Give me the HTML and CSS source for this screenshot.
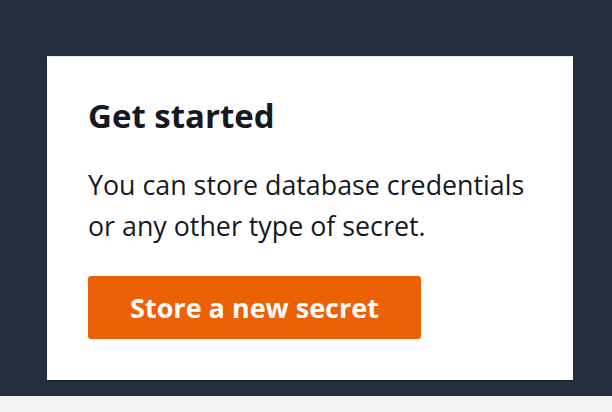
FILE: index.html
```html
<!DOCTYPE html>
<html>
<head>
<meta charset="utf-8">
<link rel="stylesheet" href="styles.css">
</head>
<body>
<div class="stage">
  <div class="card">
    <h2 class="title">Get started</h2>
    <p class="text">You can store database credentials<br>or any other type of secret.</p>
    <button class="btn">Store a new secret</button>
  </div>
</div>
<div class="footer"></div>
</body>
</html>
```
FILE: styles.css
```css
html, body {
  margin: 0;
  padding: 0;
  height: 100%;
}
body {
  background: #232f3e;
  font-family: "Open Sans", "Noto Sans", sans-serif;
  overflow: hidden;
}
.stage {
  height: 396px;
  box-sizing: border-box;
  padding: 56px 0 0 47px;
}
.card {
  width: 526px;
  height: 324px;
  box-sizing: border-box;
  background: #fff;
  border-top: 1px solid #eaeded;
  box-shadow: 0 1px 1px 0 rgba(0, 28, 36, 0.6);
  padding: 39px 20px 0 41px;
  display: flex;
  flex-direction: column;
  align-items: flex-start;
}
.title {
  margin: 0;
  font-size: 33px;
  font-weight: 700;
  color: #16191f;
  line-height: 40px;
}
.text {
  margin: 28px 0 0;
  font-size: 26.8px;
  line-height: 41px;
  color: #16191f;
  white-space: nowrap;
}
.btn {
  margin-top: 30px;
  width: 333px;
  height: 63px;
  border: none;
  border-radius: 3px;
  background: #ec6008;
  color: #fff;
  font-family: inherit;
  font-size: 27px;
  font-weight: 700;
  padding: 0;
  text-align: center;
}
.footer {
  height: 16px;
  background: #f2f3f3;
}
```
